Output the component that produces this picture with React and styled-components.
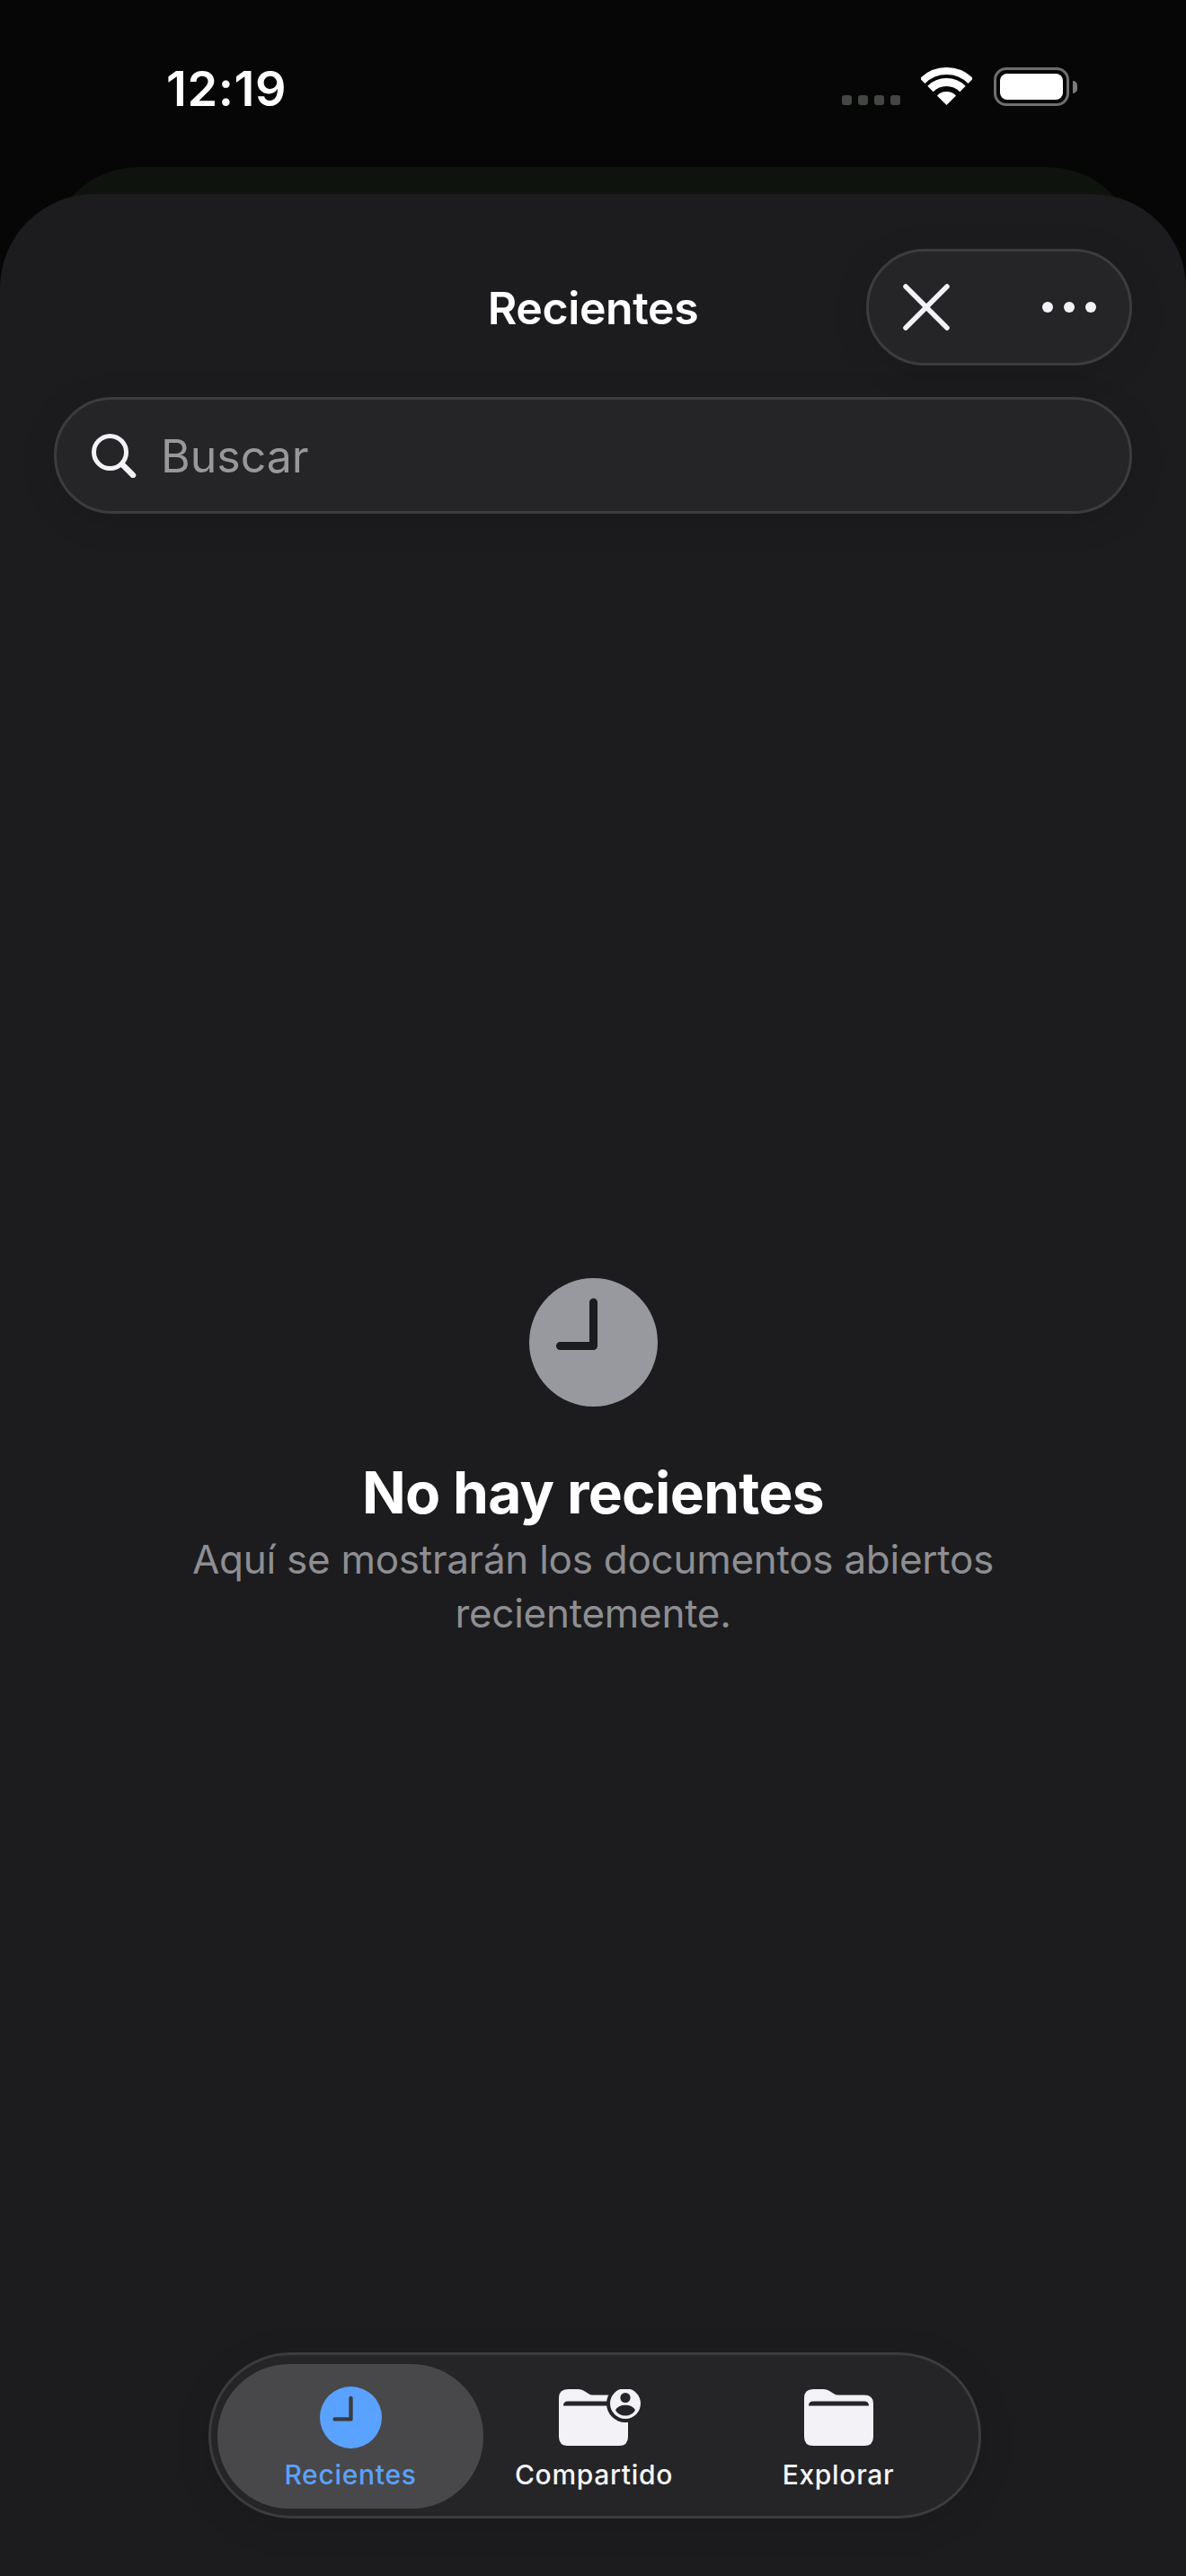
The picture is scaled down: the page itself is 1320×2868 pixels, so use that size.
import React from 'react';
import styled, { createGlobalStyle } from 'styled-components';

const GlobalStyle = createGlobalStyle`
    html, body {
        margin: 0;
        padding: 0;
        background: #040603;
    }
    * {
        box-sizing: border-box;
    }
`;

const Phone = styled.div`
    width: 1320px;
    height: 2868px;
    overflow: hidden;
    display: flex;
    flex-direction: column;
    background: linear-gradient(180deg, #050605 0%, #050804 100%);
    font-family: Inter, "Liberation Sans", sans-serif;
    color: #fff;
`;

const StatusBar = styled.div`
    height: 186px;
    flex-shrink: 0;
    display: flex;
    align-items: flex-start;
    justify-content: space-between;
    padding: 75px 130px 0 185px;
`;

const Time = styled.div`
    font-size: 54px;
    font-weight: 600;
    line-height: 48px;
    letter-spacing: 0.6px;
`;

const StatusIcons = styled.div`
    display: flex;
    align-items: flex-start;
`;

const SignalDots = styled.div`
    display: flex;
    gap: 7px;
    margin: 31px 23px 0 0;
`;

const SignalDot = styled.span`
    width: 11px;
    height: 11px;
    border-radius: 3px;
    background: #444644;
`;

const Battery = styled.div`
    width: 84px;
    height: 43px;
    margin-left: 24px;
    padding: 4px;
    border: 3px solid #6e6e6e;
    border-radius: 14px;
    position: relative;
    &::after {
        content: '';
        position: absolute;
        right: -12px;
        top: 12px;
        width: 5px;
        height: 14px;
        border-radius: 0 5px 5px 0;
        background: #7a7a7a;
    }
`;

const BatteryFill = styled.div`
    height: 100%;
    border-radius: 8px;
    background: #fff;
`;

const BackSheet = styled.div`
    height: 130px;
    flex-shrink: 0;
    margin: 0 54px -100px;
    border-radius: 100px 100px 0 0;
    background: #0e130e;
`;

const Sheet = styled.div`
    flex: 1;
    position: relative;
    display: flex;
    flex-direction: column;
    border-radius: 105px 105px 0 0;
    background: #1c1c1e;
    padding: 61px 60px 64px;
`;

const Header = styled.div`
    display: grid;
    grid-template-columns: 1fr auto 1fr;
    align-items: center;
`;

const Title = styled.div`
    grid-column: 2;
    font-size: 50px;
    font-weight: 600;
    letter-spacing: -0.4px;
    text-align: center;
    margin-top: 1px;
`;

const ActionPill = styled.div`
    grid-column: 3;
    justify-self: end;
    width: 296px;
    height: 130px;
    display: flex;
    align-items: center;
    justify-content: space-between;
    padding: 0 37px 0 38px;
    border: 3px solid #3c3c40;
    border-radius: 65px;
    background: #252527;
    box-shadow: 0 8px 40px rgba(0, 0, 0, 0.12);
`;

const Dots = styled.div`
    display: flex;
    gap: 12px;
`;

const Dot = styled.span`
    width: 12px;
    height: 12px;
    border-radius: 50%;
    background: #f2f2f7;
`;

const SearchBar = styled.div`
    height: 130px;
    margin-top: 35px;
    display: flex;
    align-items: center;
    gap: 27px;
    padding: 0 39px;
    border: 3px solid #3c3c40;
    border-radius: 65px;
    background: #252527;
    box-shadow: 0 8px 40px rgba(0, 0, 0, 0.12);
`;

const Placeholder = styled.div`
    font-size: 50px;
    color: #98989a;
    margin-top: 1px;
`;

const Empty = styled.div`
    margin-top: 851px;
    display: flex;
    flex-direction: column;
    align-items: center;
`;

const EmptyTitle = styled.div`
    margin-top: 57px;
    font-size: 64px;
    line-height: 78px;
    font-weight: 700;
    letter-spacing: -0.7px;
`;

const EmptyText = styled.div`
    width: 940px;
    margin-top: 5px;
    font-size: 44px;
    line-height: 60px;
    letter-spacing: -0.27px;
    text-align: center;
    color: #8e8e93;
`;

const TabBar = styled.div`
    margin: auto 0 0 172px;
    width: 860px;
    height: 185px;
    display: grid;
    grid-template-columns: 296px 246px 298px;
    padding: 10px 7px 8px;
    border: 3px solid #3c3c40;
    border-radius: 92px;
    background: #252527;
    box-shadow: 0 8px 40px rgba(0, 0, 0, 0.12);
`;

const Tab = styled.div`
    display: flex;
    flex-direction: column;
    align-items: center;
    padding-top: 24px;
    border-radius: 80px;
    background: ${(p) => (p.$active ? '#48484a' : 'transparent')};
    color: ${(p) => (p.$active ? '#5aa2ff' : '#f5f5f7')};
`;

const TabIcon = styled.div`
    height: 70px;
    display: flex;
    align-items: center;
    padding-left: ${(p) => p.$shift || 0}px;
`;

const TabLabel = styled.div`
    margin-top: 11px;
    font-size: 30px;
    line-height: 36px;
    font-weight: 500;
    letter-spacing: 0.7px;
`;

const WifiIcon = () => (
    <svg width="57" height="42" viewBox="0 0 57 42" fill="none">
        <path d="M1.63 15.13A38 38 0 0 1 55.37 15.13" stroke="#fff" strokeWidth="8" />
        <path d="M10.47 23.97A25.5 25.5 0 0 1 46.53 23.97" stroke="#fff" strokeWidth="9" />
        <path d="M28.5 42L17.9 31.4A15 15 0 0 1 39.1 31.4Z" fill="#fff" />
    </svg>
);

const CloseIcon = () => (
    <svg width="52" height="52" viewBox="0 0 52 52" fill="none">
        <path d="M3 3L49 49M49 3L3 49" stroke="#f2f2f7" strokeWidth="5.5" strokeLinecap="round" />
    </svg>
);

const SearchIcon = () => (
    <svg width="50" height="50" viewBox="0 0 50 50" fill="none">
        <circle cx="20.5" cy="21.5" r="18" stroke="#f2f2f7" strokeWidth="5" />
        <path d="M34 35L46 47" stroke="#f2f2f7" strokeWidth="6.5" strokeLinecap="round" />
    </svg>
);

const ClockIcon = ({ size, color, hand }) => (
    <svg width={size} height={size} viewBox="0 0 143 143">
        <circle cx="71.5" cy="71.5" r="71.5" fill={color} />
        <path
            d="M71.5 27V75.5H34.5"
            fill="none"
            stroke={hand}
            strokeWidth="9"
            strokeLinecap="round"
            strokeLinejoin="round"
        />
    </svg>
);

const folderPath =
    'M0 10Q0 0 10 0H22Q26 0 29 2.5L33 5Q35 6.5 38 6.5H67Q77 6.5 77 16V53Q77 63 67 63H10Q0 63 0 53Z';
const folderSlit = 'M5 18.5Q5 13.5 10 13.5H67Q72 13.5 72 18.5Z';

const FolderIcon = () => (
    <svg width="77" height="63" viewBox="0 0 77 63">
        <path d={folderPath} fill="#f2f2f7" />
        <path d={folderSlit} fill="#252527" />
    </svg>
);

const SharedFolderIcon = () => (
    <svg width="91" height="63" viewBox="0 0 91 63">
        <path d={folderPath} fill="#f2f2f7" />
        <path d={folderSlit} fill="#252527" />
        <circle cx="74" cy="16" r="21" fill="#252527" />
        <circle cx="74" cy="16" r="17" fill="#f2f2f7" />
        <circle cx="74" cy="9.5" r="5.6" fill="#252527" />
        <path d="M63 23.5C65 19.5 69 17.8 74 17.8S83 19.5 85 23.5C82.5 27.5 78.5 29.5 74 29.5S65.5 27.5 63 23.5Z" fill="#252527" />
    </svg>
);

const App = () => {
    return (
        <Phone>
            <GlobalStyle />
            <StatusBar>
                <Time>12:19</Time>
                <StatusIcons>
                    <SignalDots>
                        <SignalDot />
                        <SignalDot />
                        <SignalDot />
                        <SignalDot />
                    </SignalDots>
                    <WifiIcon />
                    <Battery>
                        <BatteryFill />
                    </Battery>
                </StatusIcons>
            </StatusBar>
            <BackSheet />
            <Sheet>
                <Header>
                    <Title>Recientes</Title>
                    <ActionPill>
                        <CloseIcon />
                        <Dots>
                            <Dot />
                            <Dot />
                            <Dot />
                        </Dots>
                    </ActionPill>
                </Header>
                <SearchBar>
                    <SearchIcon />
                    <Placeholder>Buscar</Placeholder>
                </SearchBar>
                <Empty>
                    <ClockIcon size={143} color="#98989f" hand="#1c1c1e" />
                    <EmptyTitle>No hay recientes</EmptyTitle>
                    <EmptyText>Aquí se mostrarán los documentos abiertos recientemente.</EmptyText>
                </Empty>
                <TabBar>
                    <Tab $active>
                        <TabIcon>
                            <ClockIcon size={69} color="#5aa2ff" hand="#3a3a3e" />
                        </TabIcon>
                        <TabLabel>Recientes</TabLabel>
                    </Tab>
                    <Tab>
                        <TabIcon $shift={13}>
                            <SharedFolderIcon />
                        </TabIcon>
                        <TabLabel>Compartido</TabLabel>
                    </Tab>
                    <Tab>
                        <TabIcon>
                            <FolderIcon />
                        </TabIcon>
                        <TabLabel>Explorar</TabLabel>
                    </Tab>
                </TabBar>
            </Sheet>
        </Phone>
    );
};

export default App;
